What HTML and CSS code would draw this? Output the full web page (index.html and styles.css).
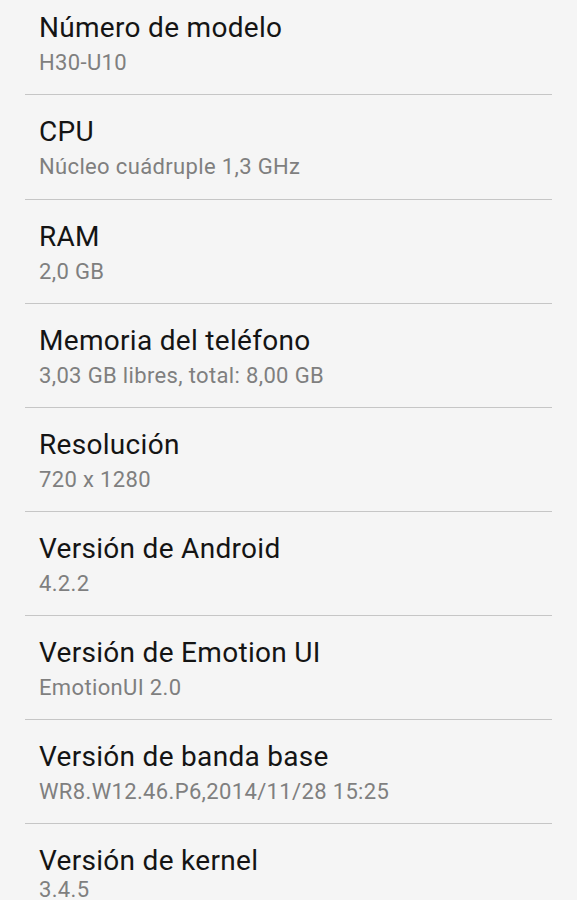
FILE: index.html
```html
<!DOCTYPE html>
<html lang="es">
<head>
    <meta charset="UTF-8">
    <meta name="viewport" content="width=device-width, initial-scale=1.0">
    <title>Acerca del teléfono</title>
    <link rel="stylesheet" href="styles.css">
</head>
<body>
    <ul class="info-list">
        <li class="info-item">
            <div class="info-title">Número de modelo</div>
            <div class="info-value">H30-U10</div>
        </li>
        <li class="info-item">
            <div class="info-title">CPU</div>
            <div class="info-value">Núcleo cuádruple 1,3 GHz</div>
        </li>
        <li class="info-item">
            <div class="info-title">RAM</div>
            <div class="info-value">2,0 GB</div>
        </li>
        <li class="info-item">
            <div class="info-title">Memoria del teléfono</div>
            <div class="info-value">3,03 GB libres, total: 8,00 GB</div>
        </li>
        <li class="info-item">
            <div class="info-title">Resolución</div>
            <div class="info-value">720 x 1280</div>
        </li>
        <li class="info-item">
            <div class="info-title">Versión de Android</div>
            <div class="info-value">4.2.2</div>
        </li>
        <li class="info-item">
            <div class="info-title">Versión de Emotion UI</div>
            <div class="info-value">EmotionUI 2.0</div>
        </li>
        <li class="info-item">
            <div class="info-title">Versión de banda base</div>
            <div class="info-value">WR8.W12.46.P6,2014/11/28 15:25</div>
        </li>
        <li class="info-item">
            <div class="info-title">Versión de kernel</div>
            <div class="info-value">3.4.5</div>
        </li>
    </ul>
</body>
</html>
```

FILE: styles.css
```css
/* General Reset */
* {
    box-sizing: border-box;
    margin: 0;
    padding: 0;
    font-family: Roboto, "Noto Sans", sans-serif;
}

body {
    background-color: #f5f5f5;
    min-height: 100vh;
    overflow: hidden;
}

/* Settings list */
.info-list {
    list-style: none;
    padding: 0 25px;
}

.info-item {
    padding: 21px 0 17.1px 14px;
    border-bottom: 1px solid #c6c6c6;
}

.info-item:first-child {
    padding-top: 12.4px;
}

.info-item:last-child .info-value {
    margin-top: -1px;
}

.info-title {
    font-size: 28px;
    line-height: 32px;
    letter-spacing: 0.3px;
    color: #141414;
}

.info-value {
    margin-top: 5px;
    font-size: 22px;
    line-height: 28px;
    letter-spacing: 0.35px;
    color: #7f7f7f;
}
```
